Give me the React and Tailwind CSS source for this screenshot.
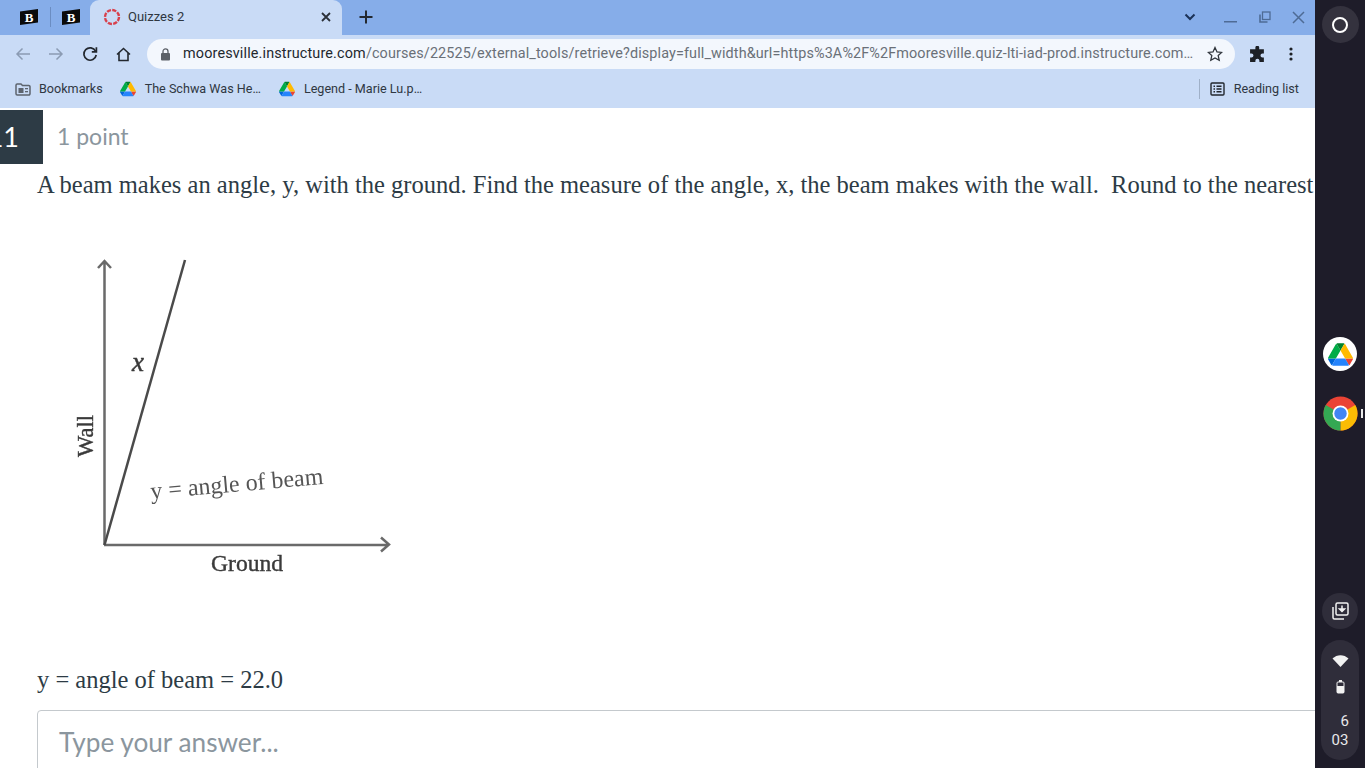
import React from "react";

const Drive = ({ s = 18 }) => (
  <svg width={s} height={s} viewBox="0 0 87.3 78">
    <path d="m6.6 66.85 3.85 6.65c.8 1.4 1.95 2.5 3.3 3.3l13.75-23.8h-27.5c0 1.55.4 3.1 1.2 4.5z" fill="#0066da" />
    <path d="m43.65 25-13.75-23.8c-1.35.8-2.5 1.9-3.3 3.3l-25.4 44a9.06 9.06 0 0 0 -1.2 4.5h27.5z" fill="#00ac47" />
    <path d="m73.55 76.8c1.35-.8 2.5-1.9 3.3-3.3l1.6-2.75 7.65-13.25c.8-1.4 1.2-2.95 1.2-4.5h-27.502l5.852 11.5z" fill="#ea4335" />
    <path d="m43.65 25 13.75-23.8c-1.35-.8-2.9-1.2-4.5-1.2h-18.5c-1.6 0-3.15.45-4.5 1.2z" fill="#00832d" />
    <path d="m59.8 53h-32.3l-13.75 23.8c1.35.8 2.9 1.2 4.5 1.2h50.8c1.6 0 3.15-.45 4.5-1.2z" fill="#2684fc" />
    <path d="m73.4 26.5-12.7-22c-.8-1.4-1.95-2.5-3.3-3.3l-13.75 23.8 16.15 28h27.45c0-1.55-.4-3.1-1.2-4.5z" fill="#ffba00" />
  </svg>
);

const B = () => (
  <svg width="18" height="16" viewBox="0 0 18 16">
    <path d="M0 2.500 18 0v13.500L0 16z" fill="#0b0b0b" />
    <text x="9" y="12.500" textAnchor="middle" fontSize="13" fontWeight="700" fontFamily="'Liberation Serif', serif" fill="#fff">B</text>
  </svg>
);

export default function App() {
  return (
    <div className="flex h-[768px] w-[1365px] overflow-hidden bg-white font-['Roboto',sans-serif]">
      <div className="flex w-[1315px] shrink-0 flex-col overflow-hidden">
        {/* Tab strip */}
        <div className="flex h-[35px] shrink-0 items-center bg-[#86ade9]">
          <div className="mb-[2px] flex w-[90px] items-center pl-[20px]">
            <B />
            <div className="mx-[11.5px] h-[20px] w-px bg-[#6b8dc2]" />
            <B />
          </div>
          <div className="flex h-[35px] w-[252px] items-center rounded-t-[9px] bg-[#c9dbf6] pb-[2px] pl-[13px] pr-[10px]">
            <svg width="18" height="18" viewBox="0 0 18 18">
              <circle cx="9" cy="9" r="7" fill="none" stroke="#d8404c" strokeWidth="2.400" strokeDasharray="4.200 1.300" />
            </svg>
            <span className="ml-[7px] flex-1 text-[13px] text-[#2e3640]">Quizzes 2</span>
            <svg width="12" height="12" viewBox="0 0 12 12" stroke="#2b3038" strokeWidth="1.800">
              <path d="M2 2l8 8M10 2l-8 8" />
            </svg>
          </div>
          <svg className="mb-[2px] ml-[16px]" width="16" height="16" viewBox="0 0 16 16" stroke="#23282f" strokeWidth="2">
            <path d="M8 1.500v13M1.500 8h13" />
          </svg>
          <div className="flex-1" />
          <svg className="mb-[2px]" width="12" height="8" viewBox="0 0 12 8" fill="none" stroke="#1b3257" strokeWidth="2">
            <path d="M1.500 1.500 6 6l4.500-4.500" />
          </svg>
          <svg className="ml-[28px] mt-[9px]" width="13" height="2" viewBox="0 0 13 2">
            <rect width="13" height="1.500" fill="#4e6b95" />
          </svg>
          <svg className="mb-[2px] ml-[22px]" width="12" height="12" viewBox="0 0 12 12" fill="none" stroke="#4e6b95" strokeWidth="1.300">
            <rect x="3.500" y="1" width="7.500" height="7.500" />
            <path d="M1 3.500V11h7.500" strokeWidth="1.600" />
          </svg>
          <svg className="ml-[21px] mr-[10px]" width="13" height="13" viewBox="0 0 13 13" stroke="#4e6b95" strokeWidth="1.500">
            <path d="M1 1l11 11M12 1 1 12" />
          </svg>
        </div>

        {/* Toolbar */}
        <div className="flex h-[37px] shrink-0 items-center bg-[#c9dbf6] pt-px">
          <svg className="ml-[15px]" width="16" height="14" viewBox="0 0 16 14" fill="none" stroke="#8b9bb3" strokeWidth="1.500">
            <path d="M15 7H2M7.500 1.500 2 7l5.500 5.500" />
          </svg>
          <svg className="ml-[17px]" width="16" height="14" viewBox="0 0 16 14" fill="none" stroke="#8b9bb3" strokeWidth="1.500">
            <path d="M1 7h13M8.500 1.500 14 7l-5.500 5.500" />
          </svg>
          <svg className="ml-[18px]" width="16" height="16" viewBox="0 0 16 16" fill="none" stroke="#22272e" strokeWidth="1.700">
            <path d="M13.600 5.200A6.200 6.200 0 1 0 14.200 9" />
            <path d="M14.400 1.200v4.600H9.800" />
          </svg>
          <svg className="ml-[18px]" width="15" height="15" viewBox="0 0 15 15" fill="none" stroke="#22272e" strokeWidth="1.600">
            <path d="M1 7.500 7.500 1.500 14 7.500M3 6v7.500h9V6" />
          </svg>
          <div className="ml-[16px] flex h-[30px] w-[1088px] items-center rounded-full bg-[#f3f7fd] pl-[13px] pr-[12px]">
            <svg width="11" height="13" viewBox="0 0 11 13">
              <rect x="1" y="5" width="9" height="7.500" rx="1" fill="#5c6168" />
              <path d="M3 5V3.400a2.500 2.500 0 0 1 5 0V5" fill="none" stroke="#5c6168" strokeWidth="1.300" />
            </svg>
            <span className="ml-[12px] min-w-0 flex-1 whitespace-nowrap text-[14.4px] leading-[30px] tracking-[0.125px] text-[#6a7078]">
              <span className="tracking-[0.15px] text-[#22272e]">mooresville.instructure.com</span>/courses/22525/external_tools/retrieve?display=full_width&amp;url=https%3A%2F%2Fmooresville.quiz-lti-iad-prod.instructure.com…
            </span>
            <svg className="ml-[13px]" width="16" height="16" viewBox="0 0 16 16" fill="none" stroke="#30353c" strokeWidth="1.300">
              <path d="m8 1.500 2 4.400 4.700.5-3.500 3.200 1 4.700L8 11.900l-4.200 2.400 1-4.700L1.300 6.400l4.700-.5z" />
            </svg>
          </div>
          <svg className="ml-[14px]" width="17" height="17" viewBox="0 0 16 16" fill="#1d2025">
            <path d="M6 1.500a1.800 1.800 0 0 1 3.600 0V3H14v4h-1.300a1.900 1.900 0 0 0 0 3.800H14V15H9.800v-1.200a1.900 1.900 0 0 0-3.800 0V15H1v-4.200h1.300a1.900 1.900 0 0 0 0-3.800H1V3h5z" />
          </svg>
          <svg className="ml-[23px]" width="4" height="14" viewBox="0 0 4 14" fill="#1d2025">
            <circle cx="2" cy="2" r="1.600" />
            <circle cx="2" cy="7" r="1.600" />
            <circle cx="2" cy="12" r="1.600" />
          </svg>
        </div>

        {/* Bookmarks */}
        <div className="flex h-[36px] shrink-0 items-center bg-[#c9dbf6] pb-[2px] text-[12.6px] text-[#2f3742]">
          <svg className="ml-[15px]" width="16" height="13" viewBox="0 0 16 13">
            <path d="M1 2.200A1.200 1.200 0 0 1 2.200 1H6l1.500 1.500h6.300A1.200 1.200 0 0 1 15 3.700v7.100A1.200 1.200 0 0 1 13.800 12H2.200A1.200 1.200 0 0 1 1 10.800z" fill="none" stroke="#5d646e" strokeWidth="1.500" />
            <rect x="3.500" y="5" width="5" height="5" fill="#5d646e" />
            <rect x="10" y="5" width="3" height="1.300" fill="#5d646e" />
            <rect x="10" y="8" width="3" height="1.300" fill="#5d646e" />
          </svg>
          <span className="ml-[8px]">Bookmarks</span>
          <span className="ml-[17px]"><Drive s={16} /></span>
          <span className="ml-[9px]">The Schwa Was He…</span>
          <span className="ml-[18px]"><Drive s={16} /></span>
          <span className="ml-[9px]">Legend - Marie Lu.p…</span>
          <div className="flex-1" />
          <div className="h-[20px] w-px bg-[#9fb0c8]" />
          <svg className="ml-[10px]" width="15" height="14" viewBox="0 0 15 14" fill="none" stroke="#22272e" strokeWidth="1.400">
            <rect x="1" y="1" width="13" height="12" rx="1" />
            <path d="M3.500 4.200h1.500M6.500 4.200H11.500M3.500 7h1.500M6.500 7H11.500M3.500 9.800h1.500M6.500 9.800H11.500" />
          </svg>
          <span className="ml-[9px] mr-[16px]">Reading list</span>
        </div>

        {/* Page */}
        <div className="min-h-0 flex-1 overflow-hidden bg-white">
          <div className="mt-[2px] flex h-[54px] items-center">
            <div className="flex h-[54px] w-[43px] items-center justify-end overflow-hidden bg-[#2d3b45] pr-[24px] font-['Lato',sans-serif] text-[27px] text-white">
              <span>11</span>
            </div>
            <span className="mb-[2px] ml-[14px] font-['Lato',sans-serif] text-[23px] text-[#8b969e]">1 point</span>
          </div>
          <p className="ml-[37px] mt-[4px] whitespace-pre font-['Liberation_Serif',serif] text-[24.54px] leading-[34px] text-[#2d3b45]">
            A beam makes an angle, y, with the ground. Find the measure of the angle, x, the beam makes with the wall.  Round to the nearest
          </p>
          <svg className="ml-[60px] mt-[47px] blur-[0.5px]" width="340" height="330" viewBox="0 0 340 330">
            <g fill="none" stroke="#6a6a6a" strokeWidth="2.500">
              <path d="M44.500 296V12M38 19l6.500-7 6.500 7" />
              <path d="M44 296h284M321 288.500l8 7-8 7" />
            </g>
            <path d="M44.500 296 125 11" stroke="#4a4a4a" strokeWidth="2.500" fill="none" />
            <g fontFamily="'Liberation Serif', serif" fill="#3a3a3a">
              <text x="72" y="122" fontSize="27" fontStyle="italic" stroke="#3a3a3a" strokeWidth="0.500">x</text>
              <text transform="translate(33 208) rotate(-90)" fontSize="22.500" strokeWidth="0.400" stroke="#3a3a3a">Wall</text>
              <text transform="translate(91 250) rotate(-5)" fontSize="24" fill="#555">y = angle of beam</text>
              <text x="151" y="322" fontSize="23.600" strokeWidth="0.400" stroke="#3a3a3a">Ground</text>
            </g>
          </svg>
          <p className="ml-[37px] mt-[84px] font-['Liberation_Serif',serif] text-[24.5px] leading-[34px] text-[#2d3b45]">
            y = angle of beam = 22.0
          </p>
          <div className="ml-[37px] mt-[13px] h-[80px] w-[1400px] rounded-[4px] border border-[#c4c9cd] pl-[21px] pt-[12px] font-['Lato',sans-serif] text-[26.2px] leading-[38px] text-[#8b969e]">
            Type your answer...
          </div>
        </div>
      </div>

      {/* Shelf */}
      <div className="flex w-[50px] shrink-0 flex-col items-center bg-[#1e1c29]">
        <div className="mt-[6px] flex h-[37px] w-[37px] items-center justify-center rounded-full bg-[#34323e]">
          <div className="h-[16px] w-[16px] rounded-full border-2 border-white" />
        </div>
        <div className="mt-[294px] flex h-[34px] w-[34px] items-center justify-center rounded-full bg-white">
          <Drive s={25} />
        </div>
        <div className="relative mt-[25px]">
          <svg width="35" height="35" viewBox="0 0 36 36">
            <circle cx="18" cy="18" r="17.500" fill="#ea4335" />
            <path d="M18 18 33.200 9.300A17.500 17.500 0 0 1 18 35.500z" fill="#fbbc04" />
            <path d="M18 18 18 35.500A17.500 17.500 0 0 1 2.800 9.300z" fill="#34a853" />
            <circle cx="18" cy="18" r="8.200" fill="#fff" />
            <circle cx="18" cy="18" r="6.400" fill="#4285f4" />
          </svg>
          <div className="absolute left-[38px] top-[13px] h-[9px] w-[2px] bg-[#e8e8e8]" />
        </div>
        <div className="mt-[162px] flex h-[36px] w-[36px] items-center justify-center rounded-full bg-[#2f2d3a]">
          <svg width="20" height="20" viewBox="0 0 20 20" fill="none" stroke="#f2f2f2" strokeWidth="1.500">
            <rect x="6" y="2" width="12" height="12" rx="1.500" />
            <path d="M3 6v10.500A1.500 1.500 0 0 0 4.500 18H14" />
            <path d="M12 4.500V8.500M9.500 8l2.500 2.500L14.500 8z" fill="#f2f2f2" />
          </svg>
        </div>
        <div className="mt-[11px] flex h-[120px] w-[38px] flex-col items-center rounded-full bg-[#2f2d3a] pt-[15px] font-['Roboto',sans-serif] text-[#e8e8ea]">
          <svg width="17" height="12" viewBox="0 0 16 12" fill="#f2f2f2">
            <path d="M0 3.500C4.500-1 11.500-1 16 3.500L8 12z" />
          </svg>
          <svg className="mt-[13px]" width="9" height="14" viewBox="0 0 9 14" fill="none">
            <rect x="3" y="0" width="3" height="2" fill="#f2f2f2" />
            <rect x="1" y="2" width="7" height="11" rx="1" stroke="#f2f2f2" strokeWidth="1" />
            <rect x="1" y="6" width="7" height="7" fill="#f2f2f2" />
          </svg>
          <div className="mt-[18px] w-full pr-[10px] text-right text-[15px] leading-[19px]">6</div>
          <div className="w-full text-center text-[15px] leading-[19px]">03</div>
        </div>
      </div>
    </div>
  );
}
